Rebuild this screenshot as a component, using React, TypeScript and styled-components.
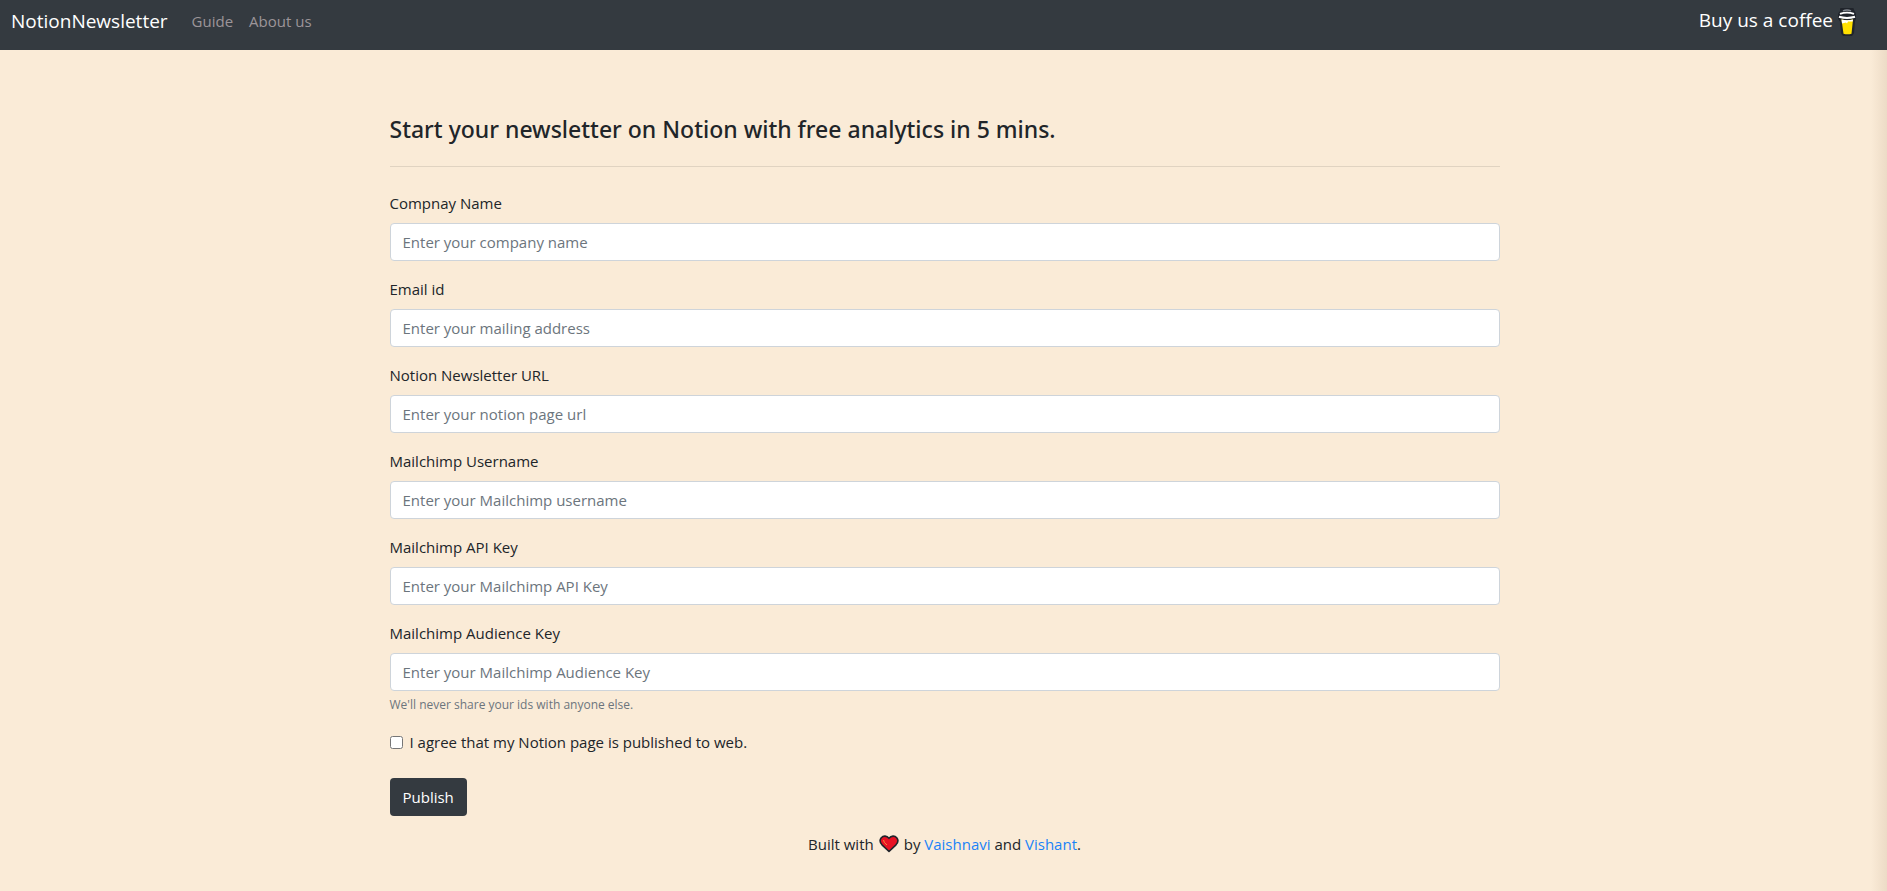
import React from "react";
import styled, { createGlobalStyle } from "styled-components";

const GlobalStyle = createGlobalStyle`
  *, *::before, *::after { box-sizing: border-box; }
  body {
    margin: 0;
    background: #faebd7;
    color: #212529;
    font-family: "Segoe UI", "Open Sans", "Noto Sans", sans-serif;
    font-size: 15px;
    line-height: 24px;
  }
`;

const Page = styled.div`
  min-height: 100vh;
  background: linear-gradient(to left, rgba(120, 80, 50, 0.1), transparent 16px);
`;

const Navbar = styled.header`
  display: flex;
  align-items: flex-start;
  justify-content: space-between;
  height: 50px;
  padding: 0 30px 0 11px;
  background: #343a40;
`;

const NavGroup = styled.nav`
  display: flex;
  align-items: center;
  gap: 16px;
  height: 42px;
`;

const Brand = styled.a`
  margin-right: 8px;
  color: #fff;
  font-size: 19px;
  text-decoration: none;
`;

const NavLink = styled.a`
  color: #9c9599;
  text-decoration: none;
`;

const CoffeeLink = styled.a`
  display: flex;
  align-items: flex-start;
  gap: 4px;
  padding-top: 8px;
  color: #fff;
  font-size: 19px;
  text-decoration: none;
`;

const Container = styled.main`
  max-width: 1140px;
  margin: 0 auto;
  padding: 63px 14px 32px 16px;
`;

const Title = styled.h1`
  margin: 0;
  font-family: "Segoe UI", "Noto Sans", sans-serif;
  font-size: 23px;
  font-weight: 500;
  line-height: 32px;
`;

const Divider = styled.hr`
  margin: 21px 0 24px;
  border: 0;
  border-top: 1px solid rgba(0, 0, 0, 0.1);
`;

const Field = styled.div`
  display: flex;
  flex-direction: column;
  margin-bottom: 16px;
`;

const Label = styled.label`
  margin-bottom: 8px;
`;

const TextInput = styled.input`
  width: 100%;
  height: 38px;
  padding: 6px 12px;
  border: 1px solid #ced4da;
  border-radius: 4px;
  background: #fff;
  color: #495057;
  font: inherit;
  &::placeholder { color: #6c757d; opacity: 1; }
`;

const Help = styled.small`
  margin-top: 4px;
  color: #6c757d;
  font-size: 12px;
  line-height: 19px;
`;

const CheckRow = styled.div`
  display: flex;
  align-items: center;
  gap: 7px;
  margin-bottom: 24px;
`;

const Checkbox = styled.input`
  width: 13px;
  height: 13px;
  margin: 0;
`;

const Submit = styled.button`
  display: block;
  height: 38px;
  padding: 0 13px;
  border: 0;
  border-radius: 4px;
  background: #343a40;
  color: #fff;
  font: inherit;
  cursor: pointer;
`;

const Footer = styled.footer`
  display: flex;
  align-items: center;
  justify-content: center;
  gap: 5px;
  margin-top: 16px;
`;

const FooterLink = styled.a`
  color: #1a83f7;
  text-decoration: none;
`;

const CoffeeIcon = () => (
  <svg width="20" height="30" viewBox="0 1 20 31" preserveAspectRatio="none" aria-hidden="true">
    <path d="M3 2Q3 1 4 1h12q1 0 1 2l2 4v5l-1 3-1 12-2 3H6l-2-3L3 15l-2-3V7l2-3z" fill="#20242b" />
    <path d="M6 4q4-2 8 0" fill="none" stroke="#80868d" strokeWidth="1.500" />
    <path d="M3 7Q10 4.500 17 7" fill="none" stroke="#fff" strokeWidth="2" />
    <path d="M2 10q8 2.500 16 0" fill="none" stroke="#fff" strokeWidth="2" />
    <path d="M4.500 13q5.500 1.500 11.500 0l-1.500 14.500q-4 1.500-8 0z" fill="#ffe000" />
    <path d="M4.500 13q5.500 1.500 11.500 0l-.3 2H11l-1 2-1-1-4 1z" fill="#fff" />
  </svg>
);

const HeartIcon = () => (
  <svg width="20" height="18" viewBox="0 0 20 18" aria-hidden="true">
    <path
      d="M10 3.300C7.700.5 4.300.5 2.300 2.700.5 5 1 7.700 3 9.800L10 16.500l7-6.700c2-2.100 2.500-4.800.7-7.100C15.700.5 12.300.5 10 3.300z"
      fill="#e81224"
      stroke="#20242b"
      strokeWidth="1.600"
      strokeLinejoin="round"
    />
    <path d="M4.500 5q0 2.500 3.500 5" fill="none" stroke="#f58a3c" strokeWidth="1" />
  </svg>
);

interface FieldSpec {
  id: string;
  label: string;
  placeholder: string;
  type?: string;
  help?: string;
}

const fields: FieldSpec[] = [
  { id: "company", label: "Compnay Name", placeholder: "Enter your company name" },
  { id: "email", label: "Email id", placeholder: "Enter your mailing address", type: "email" },
  { id: "url", label: "Notion Newsletter URL", placeholder: "Enter your notion page url" },
  { id: "username", label: "Mailchimp Username", placeholder: "Enter your Mailchimp username" },
  { id: "api-key", label: "Mailchimp API Key", placeholder: "Enter your Mailchimp API Key" },
  {
    id: "audience-key",
    label: "Mailchimp Audience Key",
    placeholder: "Enter your Mailchimp Audience Key",
    help: "We'll never share your ids with anyone else.",
  },
];

export default function App() {
  return (
    <Page>
      <GlobalStyle />
      <Navbar>
        <NavGroup>
          <Brand href="#">NotionNewsletter</Brand>
          <NavLink href="#guide">Guide</NavLink>
          <NavLink href="#about">About us</NavLink>
        </NavGroup>
        <CoffeeLink href="#coffee">
          Buy us a coffee
          <CoffeeIcon />
        </CoffeeLink>
      </Navbar>
      <Container>
        <Title>Start your newsletter on Notion with free analytics in 5 mins.</Title>
        <Divider />
        <form onSubmit={(e) => e.preventDefault()}>
          {fields.map((f) => (
            <Field key={f.id}>
              <Label htmlFor={f.id}>{f.label}</Label>
              <TextInput id={f.id} type={f.type ?? "text"} placeholder={f.placeholder} />
              {f.help && <Help>{f.help}</Help>}
            </Field>
          ))}
          <CheckRow>
            <Checkbox id="agree" type="checkbox" />
            <label htmlFor="agree">I agree that my Notion page is published to web.</label>
          </CheckRow>
          <Submit type="submit">Publish</Submit>
        </form>
        <Footer>
          <span>Built with</span>
          <HeartIcon />
          <span>
            by <FooterLink href="#vaishnavi">Vaishnavi</FooterLink> and{" "}
            <FooterLink href="#vishant">Vishant</FooterLink>.
          </span>
        </Footer>
      </Container>
    </Page>
  );
}
